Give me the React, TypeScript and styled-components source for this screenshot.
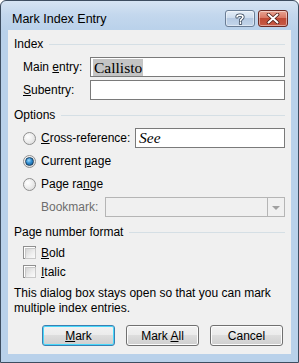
import React from "react";
import styled, { createGlobalStyle } from "styled-components";

const Global = createGlobalStyle`
  html, body { margin: 0; padding: 0; background: #ffffff; }
  body { font-family: "Liberation Sans", Arial, sans-serif; font-size: 12px; color: #000; }
  * { box-sizing: border-box; }
`;

const Window = styled.div`
  width: 299px;
  height: 363px;
  border: 1px solid #3d4d60;
  border-radius: 6px 6px 0 0;
  background: linear-gradient(#d6e4f3 0px, #c3d7ed 14px, #b9d1ea 30px, #b9d1ea 100%);
  display: flex;
  flex-direction: column;
  padding: 0 7px 8px 7px;
`;

const TitleBar = styled.div`
  height: 29px;
  display: flex;
  align-items: flex-start;
`;

const Title = styled.div`
  padding: 11px 0 0 4px;
  font-size: 12.5px;
  color: #000;
  flex: 1;
`;

const CaptionButtons = styled.div`
  display: flex;
  gap: 3px;
  margin-top: 9px;
  margin-right: 3px;
`;

const CaptionButton = styled.div<{ $close?: boolean }>`
  width: 30px;
  height: 17px;
  border: 1px solid ${(p) => (p.$close ? "#6b2a24" : "#6a7d95")};
  border-radius: 3px;
  display: flex;
  align-items: center;
  justify-content: center;
  box-shadow: inset 0 0 0 1px rgba(255, 255, 255, 0.45);
  background: ${(p) =>
    p.$close
      ? "linear-gradient(#e8a493 0%, #d97865 45%, #c04a35 50%, #c75a46 100%)"
      : "linear-gradient(#e4edf7 0%, #cddcee 45%, #b5c9e2 50%, #c3d5ea 100%)"};
`;

const Client = styled.div`
  flex: 1;
  background: #f0f0f0;
  padding: 6px 6px 8px 6px;
  display: flex;
  flex-direction: column;
`;

const GroupHeader = styled.div<{ $mt?: number }>`
  display: flex;
  align-items: center;
  gap: 6px;
  height: 16px;
  margin-top: ${(p) => p.$mt ?? 0}px;
  &::after {
    content: "";
    flex: 1;
    height: 1px;
    background: #d5dfe5;
  }
`;

const FieldRow = styled.div<{ $mt?: number }>`
  display: flex;
  align-items: center;
  height: 20px;
  margin-top: ${(p) => p.$mt ?? 0}px;
`;

const FieldLabel = styled.div<{ $w: number; $pl?: number; $disabled?: boolean }>`
  width: ${(p) => p.$w}px;
  flex: none;
  padding-left: ${(p) => p.$pl ?? 9}px;
  color: ${(p) => (p.$disabled ? "#6d6d6d" : "#000")};
  white-space: nowrap;
`;

const TextBox = styled.div`
  flex: 1;
  height: 20px;
  border: 1px solid #7a7a7a;
  background: #fff;
  display: flex;
  align-items: center;
  padding-left: 2px;
  font-family: "Liberation Serif", "Times New Roman", serif;
  font-size: 15.5px;
`;

const Selected = styled.span`
  background: #c4c4c4;
  padding: 0 1px;
  line-height: 17px;
`;

const Italic = styled.span`
  font-style: italic;
  padding-left: 1px;
`;

const OptionRow = styled.label<{ $mt?: number; $h?: number; $w?: number }>`
  display: flex;
  align-items: center;
  gap: 5px;
  padding-left: 9px;
  height: ${(p) => p.$h ?? 20}px;
  margin-top: ${(p) => p.$mt ?? 0}px;
  white-space: nowrap;
  ${(p) => (p.$w ? `width: ${p.$w}px; flex: none;` : "")}
`;

const Radio = styled.span<{ $checked?: boolean }>`
  width: 13px;
  height: 13px;
  border-radius: 50%;
  border: 1px solid #8f8f8f;
  background: radial-gradient(circle at 35% 35%, #ffffff 0%, #f0f0f0 40%, #d6d6d6 100%);
  display: flex;
  align-items: center;
  justify-content: center;
  flex: none;
  &::after {
    content: "";
    display: ${(p) => (p.$checked ? "block" : "none")};
    width: 7px;
    height: 7px;
    border-radius: 50%;
    border: 1px solid #1b3f5e;
    background: radial-gradient(circle at 40% 35%, #9fdcff 0%, #2f8cd0 45%, #0d4f8a 100%);
  }
`;

const Check = styled.span`
  width: 13px;
  height: 13px;
  border: 1px solid #8f8f8f;
  background: #fff;
  padding: 1px;
  flex: none;
  &::after {
    content: "";
    display: block;
    width: 100%;
    height: 100%;
    border: 1px solid #c8c8c8;
    background: linear-gradient(135deg, #d5d5d5 0%, #efefef 60%, #fbfbfb 100%);
  }
`;

const Combo = styled.div`
  flex: 1;
  height: 20px;
  border: 1px solid #b5b5b5;
  background: #f0f0f0;
  display: flex;
  justify-content: flex-end;
`;

const ComboButton = styled.div`
  width: 17px;
  height: 100%;
  border-left: 1px solid #b5b5b5;
  display: flex;
  align-items: center;
  justify-content: center;
  &::after {
    content: "";
    width: 0;
    height: 0;
    border-left: 4px solid transparent;
    border-right: 4px solid transparent;
    border-top: 4px solid #a0a0a0;
    margin-top: 1px;
  }
`;

const Note = styled.div`
  margin-top: 6px;
  line-height: 15px;
`;

const ButtonRow = styled.div`
  display: flex;
  justify-content: flex-end;
  gap: 11px;
  padding-right: 2px;
  margin-top: auto;
`;

const PushButton = styled.button<{ $default?: boolean }>`
  width: 73px;
  height: 21px;
  font-family: inherit;
  font-size: 12px;
  color: #000;
  padding: 0;
  border-radius: 3px;
  border: 1px solid ${(p) => (p.$default ? "#3c7fb1" : "#707070")};
  background: linear-gradient(#f2f2f2 0%, #ebebeb 50%, #dddddd 50%, #cfcfcf 100%);
  box-shadow: inset 0 0 0 1px ${(p) => (p.$default ? "#48d8fb" : "#fcfcfc")};
`;

const U = styled.span`
  text-decoration: underline;
  text-underline-offset: 1px;
`;

export default function App() {
  return (
    <>
      <Global />
      <Window>
        <TitleBar>
          <Title>Mark Index Entry</Title>
          <CaptionButtons>
            <CaptionButton>
              <svg width="10" height="12" viewBox="0 0 10 12">
                <path
                  d="M2 4 C2 1.5 8 1.5 8 4 C8 6 5.5 5.8 5.5 7.8 M5.5 9.5 L5.5 10.5"
                  fill="none"
                  stroke="#3a4a5e"
                  strokeWidth="3.2"
                  strokeLinecap="round"
                />
                <path
                  d="M2 4 C2 1.5 8 1.5 8 4 C8 6 5.5 5.8 5.5 7.8 M5.5 9.5 L5.5 10.5"
                  fill="none"
                  stroke="#ffffff"
                  strokeWidth="1.6"
                  strokeLinecap="round"
                />
              </svg>
            </CaptionButton>
            <CaptionButton $close>
              <svg width="14" height="11" viewBox="0 0 14 11">
                <path d="M2.5 1.5 L11.5 9.5 M11.5 1.5 L2.5 9.5" stroke="#4a1a14" strokeWidth="3.6" strokeLinecap="round" />
                <path d="M2.5 1.5 L11.5 9.5 M11.5 1.5 L2.5 9.5" stroke="#ffffff" strokeWidth="2" strokeLinecap="round" />
              </svg>
            </CaptionButton>
          </CaptionButtons>
        </TitleBar>
        <Client>
          <GroupHeader>Index</GroupHeader>
          <FieldRow $mt={5}>
            <FieldLabel $w={76}>
              Main <U>e</U>ntry:
            </FieldLabel>
            <TextBox>
              <Selected>Callisto</Selected>
            </TextBox>
          </FieldRow>
          <FieldRow $mt={3}>
            <FieldLabel $w={76}>
              <U>S</U>ubentry:
            </FieldLabel>
            <TextBox />
          </FieldRow>

          <GroupHeader $mt={7}>Options</GroupHeader>
          <FieldRow $mt={5}>
            <OptionRow $w={121}>
              <Radio />
              <span>
                <U>C</U>ross-reference:
              </span>
            </OptionRow>
            <TextBox>
              <Italic>See</Italic>
            </TextBox>
          </FieldRow>
          <OptionRow $mt={3}>
            <Radio $checked />
            <span>
              Current <U>p</U>age
            </span>
          </OptionRow>
          <OptionRow $mt={3}>
            <Radio />
            <span>
              Page ra<U>n</U>ge
            </span>
          </OptionRow>
          <FieldRow $mt={3}>
            <FieldLabel $w={91} $pl={27} $disabled>
              Bookmark:
            </FieldLabel>
            <Combo>
              <ComboButton />
            </Combo>
          </FieldRow>

          <GroupHeader $mt={7}>Page number format</GroupHeader>
          <OptionRow $mt={4} $h={17}>
            <Check />
            <span>
              <U>B</U>old
            </span>
          </OptionRow>
          <OptionRow $mt={2} $h={17}>
            <Check />
            <span>
              <U>I</U>talic
            </span>
          </OptionRow>
          <Note>This dialog box stays open so that you can mark multiple index entries.</Note>
          <ButtonRow>
            <PushButton $default>
              <U>M</U>ark
            </PushButton>
            <PushButton>
              Mark <U>A</U>ll
            </PushButton>
            <PushButton>Cancel</PushButton>
          </ButtonRow>
        </Client>
      </Window>
    </>
  );
}
